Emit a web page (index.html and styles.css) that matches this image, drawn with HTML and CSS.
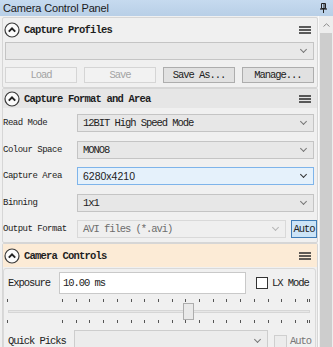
FILE: index.html
```html
<!DOCTYPE html>
<html lang="en">
<head>
    <meta charset="UTF-8">
    <meta name="viewport" content="width=device-width, initial-scale=1.0">
    <title>Camera Control Panel</title>
    <link rel="stylesheet" href="styles.css">
</head>
<body>
    <div class="window">
        <div class="titlebar">
            <span class="title">Camera Control Panel</span>
            <svg class="pin" width="7" height="10" viewBox="0 0 7 10">
                <path d="M1.5 0.5h4v5h-4z" fill="none" stroke="#222" stroke-width="1"/>
                <path d="M4 1v4" stroke="#222" stroke-width="1"/>
                <path d="M0 6h7" stroke="#222" stroke-width="1.2"/>
                <path d="M3.5 6v4" stroke="#222" stroke-width="1"/>
            </svg>
        </div>
        <div class="main">
            <div class="content">
                <!-- profiles -->
                <section class="panel">
                    <div class="panel-head">
                        <svg class="collapse" width="16" height="16" viewBox="0 0 16 16">
                            <circle cx="8" cy="8" r="7" fill="#fbfbfb" stroke="#3a3a3a" stroke-width="1.2"/>
                            <path d="M4.8 9.6L8 6.4l3.2 3.2" fill="none" stroke="#222" stroke-width="2"/>
                        </svg>
                        <h2>Capture Profiles</h2>
                        <svg class="menu" width="12" height="8" viewBox="0 0 12 8">
                            <path d="M0 1h12M0 4h12M0 7h12" stroke="#2a2a2a" stroke-width="1.6"/>
                        </svg>
                    </div>
                    <div class="combo profile-combo"><span></span><i class="chev"></i></div>
                    <div class="btn-row">
                        <button class="btn" disabled>Load</button>
                        <button class="btn" disabled>Save</button>
                        <button class="btn">Save As...</button>
                        <button class="btn">Manage...</button>
                    </div>
                </section>

                <!-- format -->
                <section class="panel">
                    <div class="panel-head shaded">
                        <svg class="collapse" width="16" height="16" viewBox="0 0 16 16">
                            <circle cx="8" cy="8" r="7" fill="#fbfbfb" stroke="#3a3a3a" stroke-width="1.2"/>
                            <path d="M4.8 9.6L8 6.4l3.2 3.2" fill="none" stroke="#222" stroke-width="2"/>
                        </svg>
                        <h2>Capture Format and Area</h2>
                        <svg class="menu" width="12" height="8" viewBox="0 0 12 8">
                            <path d="M0 1h12M0 4h12M0 7h12" stroke="#2a2a2a" stroke-width="1.6"/>
                        </svg>
                    </div>
                    <div class="form">
                        <div class="row">
                            <label>Read Mode</label>
                            <div class="combo"><span>12BIT High Speed Mode</span><i class="chev"></i></div>
                        </div>
                        <div class="row">
                            <label>Colour Space</label>
                            <div class="combo"><span>MONO8</span><i class="chev"></i></div>
                        </div>
                        <div class="row">
                            <label>Capture Area</label>
                            <div class="combo hover"><span class="sans">6280x4210</span><i class="chev dark"></i></div>
                        </div>
                        <div class="row">
                            <label>Binning</label>
                            <div class="combo"><span>1x1</span><i class="chev"></i></div>
                        </div>
                        <div class="row">
                            <label>Output Format</label>
                            <div class="combo disabled"><span>AVI files (*.avi)</span><i class="chev light"></i></div>
                            <button class="auto-btn">Auto</button>
                        </div>
                    </div>
                </section>

                <!-- camera controls -->
                <section class="panel">
                    <div class="panel-head peach">
                        <svg class="collapse" width="16" height="16" viewBox="0 0 16 16">
                            <circle cx="8" cy="8" r="7" fill="#fbfbfb" stroke="#3a3a3a" stroke-width="1.2"/>
                            <path d="M4.8 9.6L8 6.4l3.2 3.2" fill="none" stroke="#222" stroke-width="2"/>
                        </svg>
                        <h2>Camera Controls</h2>
                        <svg class="menu" width="12" height="8" viewBox="0 0 12 8">
                            <path d="M0 1h12M0 4h12M0 7h12" stroke="#2a2a2a" stroke-width="1.6"/>
                        </svg>
                    </div>
                    <div class="inner">
                        <div class="exp-row">
                            <label class="exp-label">Exposure</label>
                            <div class="text-box">10.00 ms</div>
                            <span class="check"></span>
                            <span class="check-text">LX Mode</span>
                        </div>
                        <div class="slider">
                            <div class="ticks">
                                <i class="tick"></i>
                                <div class="tick-group">
                                    <i class="tick"></i><i class="tick"></i><i class="tick"></i><i class="tick"></i><i class="tick"></i><i class="tick"></i>
                                    <i class="tick"></i><i class="tick"></i><i class="tick"></i><i class="tick"></i><i class="tick"></i><i class="tick"></i>
                                    <i class="tick"></i><i class="tick"></i><i class="tick"></i><i class="tick"></i><i class="tick"></i><i class="tick"></i>
                                </div>
                                <i class="tick end"></i><i class="tick last"></i>
                            </div>
                            <div class="track-area">
                                <div class="track"></div>
                                <div class="thumb"></div>
                            </div>
                            <div class="ticks">
                                <i class="tick"></i>
                                <div class="tick-group">
                                    <i class="tick"></i><i class="tick"></i><i class="tick"></i><i class="tick"></i><i class="tick"></i><i class="tick"></i>
                                    <i class="tick"></i><i class="tick"></i><i class="tick"></i><i class="tick"></i><i class="tick"></i><i class="tick"></i>
                                    <i class="tick"></i><i class="tick"></i><i class="tick"></i><i class="tick"></i><i class="tick"></i><i class="tick"></i>
                                </div>
                                <i class="tick end"></i><i class="tick last"></i>
                            </div>
                        </div>
                        <div class="qp-row">
                            <label class="qp-label">Quick Picks</label>
                            <div class="combo qp-combo"><span></span><i class="chev"></i></div>
                            <span class="check disabled"></span>
                            <span class="check-text muted">Auto</span>
                        </div>
                    </div>
                </section>
            </div>
            <div class="scrollbar">
                <div class="arrow"><svg width="7" height="4" viewBox="0 0 7 4"><path d="M0.5 3.5L3.5 0.8l3 2.7" fill="none" stroke="#8a8a8a" stroke-width="1"/></svg></div>
                <div class="thumb-bar"></div>
            </div>
        </div>
    </div>
</body>
</html>
```

FILE: styles.css
```css
body {
    margin: 0;
    font-family: "Liberation Mono", monospace;
    color: #222;
}
.window {
    width: 333px;
    height: 347px;
    overflow: hidden;
    background: #f0f0f0;
    display: flex;
    flex-direction: column;
}
.titlebar {
    height: 16px;
    flex-shrink: 0;
    background: linear-gradient(#c6daef, #b8cfe7);
    display: flex;
    align-items: center;
    justify-content: space-between;
    padding: 0 6px 0 3px;
}
.title {
    font: 11px "Liberation Sans", Arial, sans-serif;
    letter-spacing: -0.15px;
    color: #1a1a1a;
}
.main {
    flex: 1;
    display: flex;
    min-height: 0;
}
.content {
    width: 316px;
    padding: 1px 0 0 2px;
    display: flex;
    flex-direction: column;
}
.panel {
    border: 1px solid #d6d6d6;
    border-radius: 2px;
    background: #f0f0f0;
}
.panel-head {
    height: 23px;
    display: flex;
    align-items: center;
    gap: 4px;
    padding: 0 6px 0 1px;
}
.panel-head.shaded {
    height: 19px;
    background: #e6e6e6;
}
.panel-head.peach {
    background: #fcebd6;
}
.panel-head h2 {
    flex: 1;
    margin: 0;
    font-size: 10.5px;
    font-weight: bold;
    letter-spacing: -0.8px;
    color: #1e1e1e;
}
.menu {
    display: block;
}

/* combos and buttons */
.combo {
    height: 18px;
    box-sizing: border-box;
    border: 1px solid #c4c4c4;
    background: #e7e7e7;
    display: flex;
    align-items: center;
    padding: 0 7px 0 5px;
    font-size: 10.5px;
    letter-spacing: -1.05px;
    color: #222;
}
.combo span {
    flex: 1;
    white-space: nowrap;
}
.combo .sans {
    font-family: "Liberation Sans", Arial, sans-serif;
    font-size: 10.5px;
    letter-spacing: 0;
}
.combo.hover {
    background: #e5f1fb;
    border-color: #7eb4ea;
}
.combo.disabled {
    background: #efefef;
    border-color: #d9d9d9;
    color: #6d6d6d;
}
.chev {
    width: 4px;
    height: 4px;
    border-right: 1px solid #777;
    border-bottom: 1px solid #777;
    transform: rotate(45deg);
    margin-top: -3px;
}
.chev.dark {
    border-color: #333;
}
.chev.light {
    border-color: #b5b5b5;
}
.profile-combo {
    margin: 1px 3px 0 2px;
    background: #e8e8e8;
}
.btn-row {
    display: grid;
    grid-template-columns: repeat(4, 1fr);
    gap: 7px;
    margin: 7px 3px 4px 2px;
}
.btn {
    height: 16px;
    padding: 0;
    border: 1px solid #adadad;
    background: #e1e1e1;
    font-family: "Liberation Mono", monospace;
    font-size: 10.5px;
    letter-spacing: -1.05px;
    color: #222;
}
.btn:disabled {
    border-color: #d5d5d5;
    background: #f2f2f2;
    color: #a3a3a3;
}

/* format form */
.form {
    display: grid;
    gap: 8.5px;
    padding: 6px 3px 4px 0;
}
.row {
    display: flex;
    align-items: center;
}
.row label {
    width: 74px;
    font-size: 9px;
    letter-spacing: -0.5px;
    color: #222;
}
.row .combo {
    flex: 1;
}
.auto-btn {
    width: 26px;
    height: 18px;
    margin: 0 -3px 0 5px;
    padding: 0;
    border: 1px solid #3f7cb6;
    background: #cce4f7;
    font-family: "Liberation Mono", monospace;
    font-size: 10.5px;
    letter-spacing: -1.05px;
    color: #222;
}

/* camera controls */
.inner {
    margin: 1px 1px 4px 0;
    border: 1px solid #d9d9d9;
    border-radius: 3px;
    padding: 3px 4px 0 4px;
    font-size: 10.5px;
    letter-spacing: -1.05px;
}
.exp-row,
.qp-row {
    display: flex;
    align-items: center;
}
.exp-label {
    width: 51px;
}
.text-box {
    width: 187px;
    height: 22px;
    box-sizing: border-box;
    border: 1px solid #c9c9c9;
    background: #fff;
    display: flex;
    align-items: center;
    padding-left: 3px;
}
.check {
    width: 12px;
    height: 12px;
    box-sizing: border-box;
    border: 1px solid #333;
    background: #fff;
    margin: 0 4px 0 10px;
}
.check.disabled {
    width: 13px;
    height: 13px;
    border-color: #cfcfcf;
    background: #ececec;
    margin: 0 3px 0 6px;
}
.muted {
    color: #777;
}
.slider {
    margin: 5px 0 0 -1px;
}
.ticks {
    display: flex;
    height: 3px;
}
.tick {
    width: 1px;
    height: 3px;
    background: #555;
}
.tick-group {
    width: 234px;
    margin-left: 54px;
    display: flex;
    justify-content: space-between;
}
.tick.end {
    margin-left: 11px;
}
.tick.last {
    margin-left: 1px;
}
.track-area {
    position: relative;
    height: 18px;
}
.track {
    position: absolute;
    left: 1px;
    top: 8px;
    width: 302px;
    height: 3px;
    box-sizing: border-box;
    border: 1px solid #d6d6d6;
    background: #e7e7e7;
}
.thumb {
    position: absolute;
    left: 176px;
    top: 1px;
    width: 11px;
    height: 17px;
    box-sizing: border-box;
    border: 1px solid #adadad;
    background: #e9e9e9;
}
.qp-row {
    margin-top: 7px;
}
.qp-label {
    width: 67px;
}
.qp-combo {
    width: 196px;
    height: 22px;
    background: #ececec;
    border-color: #cdcdcd;
}

/* scrollbar */
.scrollbar {
    width: 15px;
    display: flex;
    flex-direction: column;
    background: #ededed;
    border-left: 1px solid #fafafa;
}
.arrow {
    height: 17px;
    display: flex;
    align-items: center;
    justify-content: center;
}
.thumb-bar {
    flex: 1;
    margin: 0 1px;
    background: #cdcdcd;
}
```
